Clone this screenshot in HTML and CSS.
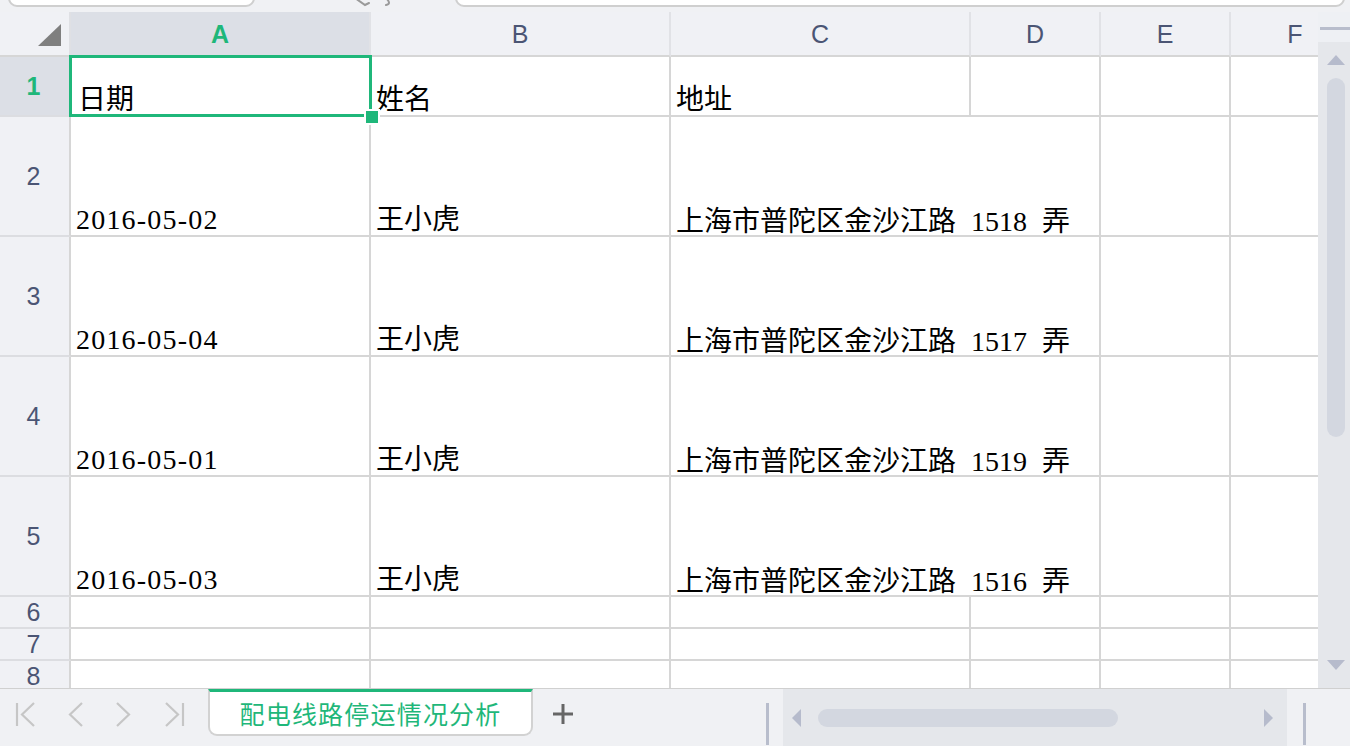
FILE: index.html
```html
<!DOCTYPE html>
<html lang="zh-CN">
<head>
<meta charset="utf-8">
<title>Sheet</title>
<link rel="stylesheet" href="styles.css">
</head>
<body>
<div class="topbar">
  <div class="namebox"></div>
  <div class="tools">
    <svg width="200" height="12" viewBox="0 0 200 12">
      <path d="M100 -2 L110 5 L114 3" fill="none" stroke="#9a9a9a" stroke-width="2" stroke-linecap="round"/>
      <path d="M131 -2 Q137 4 131 5" fill="none" stroke="#9a9a9a" stroke-width="2" stroke-linecap="round"/>
    </svg>
  </div>
  <div class="formula"></div>
</div>

<div class="main">
  <div class="sheet">
    <div class="grid">
      <div class="corner"><span class="corner-tri"></span></div>
      <div class="ch sel">A</div>
      <div class="ch">B</div>
      <div class="ch">C</div>
      <div class="ch">D</div>
      <div class="ch">E</div>
      <div class="ch">F</div>

      <div class="rh sel">1</div>
      <div class="c a1">日期<div class="selbox"><span class="handle"></span></div></div>
      <div class="c">姓名</div>
      <div class="c">地址</div>
      <div class="c"></div>
      <div class="c"></div>
      <div class="c"></div>

      <div class="rh">2</div>
      <div class="c date">2016-05-02</div>
      <div class="c">王小虎</div>
      <div class="c wide">上海市普陀区金沙江路 <span class="num">1518</span> 弄</div>
      <div class="c"></div>
      <div class="c"></div>

      <div class="rh">3</div>
      <div class="c date">2016-05-04</div>
      <div class="c">王小虎</div>
      <div class="c wide">上海市普陀区金沙江路 <span class="num">1517</span> 弄</div>
      <div class="c"></div>
      <div class="c"></div>

      <div class="rh">4</div>
      <div class="c date">2016-05-01</div>
      <div class="c">王小虎</div>
      <div class="c wide">上海市普陀区金沙江路 <span class="num">1519</span> 弄</div>
      <div class="c"></div>
      <div class="c"></div>

      <div class="rh">5</div>
      <div class="c date">2016-05-03</div>
      <div class="c">王小虎</div>
      <div class="c wide">上海市普陀区金沙江路 <span class="num">1516</span> 弄</div>
      <div class="c"></div>
      <div class="c"></div>

      <div class="rh">6</div>
      <div class="c"></div><div class="c"></div><div class="c"></div><div class="c"></div><div class="c"></div><div class="c"></div>
      <div class="rh">7</div>
      <div class="c"></div><div class="c"></div><div class="c"></div><div class="c"></div><div class="c"></div><div class="c"></div>
      <div class="rh">8</div>
      <div class="c"></div><div class="c"></div><div class="c"></div><div class="c"></div><div class="c"></div><div class="c"></div>
    </div>
  </div>
  <div class="vscroll">
    <div class="vs-top"><div class="vs-dash"></div></div>
    <div class="vs-track">
      <span class="arrow-up"></span>
      <div class="vs-thumb"></div>
      <span class="arrow-down"></span>
    </div>
  </div>
</div>

<div class="bottombar">
  <svg class="nav" width="208" height="57" viewBox="0 0 208 57">
    <g fill="none" stroke="#c6c6c6" stroke-width="2.2">
      <path d="M17 14 V37"/>
      <path d="M34 14 L22 25.5 L34 37"/>
      <path d="M82 14 L70 25.5 L82 37"/>
      <path d="M117 14 L129 25.5 L117 37"/>
      <path d="M166 14 L178 25.5 L166 37"/>
      <path d="M183 14 V37"/>
    </g>
  </svg>
  <div class="tab">配电线路停运情况分析</div>
  <svg class="plus" width="20" height="20" viewBox="0 0 20 20">
    <path d="M10 0 V20 M0 10 H20" stroke="#666" stroke-width="3"/>
  </svg>
  <div class="sep sep1"></div>
  <div class="hscroll">
    <span class="arrow-left"></span>
    <div class="hs-thumb"></div>
    <span class="arrow-right"></span>
  </div>
  <div class="sep sep2"></div>
</div>
</body>
</html>
```

FILE: styles.css
```css
html, body {
  margin: 0;
  padding: 0;
}
body {
  width: 1350px;
  height: 746px;
  overflow: hidden;
  background: #f0f1f4;
  font-family: "Liberation Sans", "Noto Sans CJK SC", sans-serif;
}

/* top strip */
.topbar {
  height: 12px;
  display: flex;
  overflow: hidden;
  background: #f0f1f4;
}
.namebox {
  margin-left: 8px;
  width: 247px;
  height: 30px;
  margin-top: -23px;
  box-sizing: border-box;
  background: #fff;
  border: 2px solid #cfcfcf;
  border-radius: 9px;
}
.tools {
  width: 200px;
  height: 12px;
}
.tools svg { display: block; }
.formula {
  width: 890px;
  height: 30px;
  margin-top: -23px;
  box-sizing: border-box;
  background: #fff;
  border: 2px solid #cfcfcf;
  border-radius: 9px;
}

/* main area */
.main {
  display: flex;
  height: 676px;
}
.sheet {
  width: 1318px;
  height: 676px;
  overflow: hidden;
  background: #fff;
}
.grid {
  display: grid;
  grid-template-columns: 71px 300px 300px 300px 130px 130px 130px;
  grid-template-rows: 45px 60px 120px 120px 120px 120px 32px 32px 32px;
}

.corner {
  background: #f0f1f5;
  border-bottom: 2px solid #d6d6d6;
  border-right: 2px solid #dfe0e4;
  box-sizing: border-box;
  display: flex;
  justify-content: flex-end;
  align-items: flex-end;
  padding: 0 8px 9px 0;
}
.corner-tri {
  width: 0;
  height: 0;
  border-left: 23px solid transparent;
  border-bottom: 22px solid #7f7f7f;
}

.ch {
  box-sizing: border-box;
  background: #f0f1f5;
  border-right: 2px solid #e1e2e6;
  border-bottom: 2px solid #d6d6d6;
  display: flex;
  align-items: center;
  justify-content: center;
  font-size: 25px;
  color: #4b5574;
  padding-top: 1px;
}
.ch.sel {
  background: #dcdfe6;
  color: #1fb77a;
  font-weight: bold;
}

.rh {
  box-sizing: border-box;
  background: #f0f1f5;
  border-right: 2px solid #d6d6d6;
  border-bottom: 2px solid #dcdde1;
  display: flex;
  align-items: center;
  justify-content: center;
  font-size: 25px;
  color: #4b5574;
  padding-right: 2px;
}
.rh.sel {
  background: #dcdfe6;
  color: #1fb77a;
  font-weight: bold;
}

.c {
  box-sizing: border-box;
  background: #fff;
  border-right: 2px solid #d6d6d6;
  border-bottom: 2px solid #d6d6d6;
  display: flex;
  align-items: flex-end;
  padding: 0 4px 1px 5px;
  font-family: "Liberation Serif", "Noto Sans CJK SC", serif;
  font-size: 28px;
  line-height: 1;
  color: #000;
  white-space: pre;
}
.c.date {
  letter-spacing: 1.2px;
}
.c.wide {
  grid-column: span 2;
  word-spacing: 8px;
  display: block;
  padding-top: 91px;
}
.num {
  word-spacing: 0;
}

.a1 {
  position: relative;
  padding-left: 7px;
}
.selbox {
  position: absolute;
  top: -2px;
  left: -2px;
  right: -3px;
  bottom: -2px;
  border: 3px solid #1fb77a;
}
.handle {
  position: absolute;
  right: -9px;
  bottom: -9px;
  width: 12px;
  height: 12px;
  background: #1fb77a;
  box-shadow: 0 0 0 2px #fff;
}

/* vertical scrollbar */
.vscroll {
  width: 32px;
  display: flex;
  flex-direction: column;
}
.vs-top {
  height: 30px;
  background: #eef0f4;
  padding-top: 15px;
  box-sizing: border-box;
}
.vs-dash {
  margin-left: 2px;
  height: 3px;
  background: #b8bdcc;
}
.vs-track {
  flex: 1;
  background: #e5e7eb;
  display: flex;
  flex-direction: column;
  padding-left: 9px;
}
.arrow-up {
  margin-top: 13px;
  width: 0;
  height: 0;
  border-left: 9px solid transparent;
  border-right: 9px solid transparent;
  border-bottom: 10px solid #b6bbcc;
}
.vs-thumb {
  margin-top: 13px;
  width: 18px;
  height: 359px;
  border-radius: 9px;
  background: #d3d7e0;
}
.arrow-down {
  margin-top: auto;
  margin-bottom: 18px;
  width: 0;
  height: 0;
  border-left: 9px solid transparent;
  border-right: 9px solid transparent;
  border-top: 10px solid #b6bbcc;
}

/* bottom bar */
.bottombar {
  height: 58px;
  box-sizing: border-box;
  border-top: 1px solid #d0d0d0;
  background: #f0f1f4;
  display: flex;
  align-items: flex-start;
}
.nav {
  display: block;
  flex: none;
}
.tab {
  width: 325px;
  height: 47px;
  box-sizing: border-box;
  background: #fff;
  border: 2px solid #d2d2d2;
  border-top: 3px solid #1fb77a;
  border-radius: 0 0 9px 9px;
  display: flex;
  align-items: center;
  justify-content: center;
  font-family: "Noto Sans CJK SC", sans-serif;
  font-size: 25px;
  letter-spacing: 1.2px;
  color: #1fb77a;
  padding-bottom: 1px;
}
.plus {
  display: block;
  margin-left: 20px;
  margin-top: 15px;
  flex: none;
}
.sep {
  width: 3px;
  height: 42px;
  margin-top: 14px;
  background: #b8bdcc;
  flex: none;
}
.sep1 { margin-left: 193px; }
.sep2 { margin-left: 16px; }
.hscroll {
  margin-left: 14px;
  width: 504px;
  height: 57px;
  background: #e5e7eb;
  display: flex;
  align-items: center;
  padding-left: 9px;
  box-sizing: border-box;
}
.arrow-left {
  width: 0;
  height: 0;
  border-top: 9px solid transparent;
  border-bottom: 9px solid transparent;
  border-right: 9px solid #b6bbcc;
}
.hs-thumb {
  margin-left: 17px;
  width: 300px;
  height: 18px;
  border-radius: 9px;
  background: #d3d7e0;
}
.arrow-right {
  margin-left: auto;
  margin-right: 14px;
  width: 0;
  height: 0;
  border-top: 9px solid transparent;
  border-bottom: 9px solid transparent;
  border-left: 9px solid #b6bbcc;
}
```
